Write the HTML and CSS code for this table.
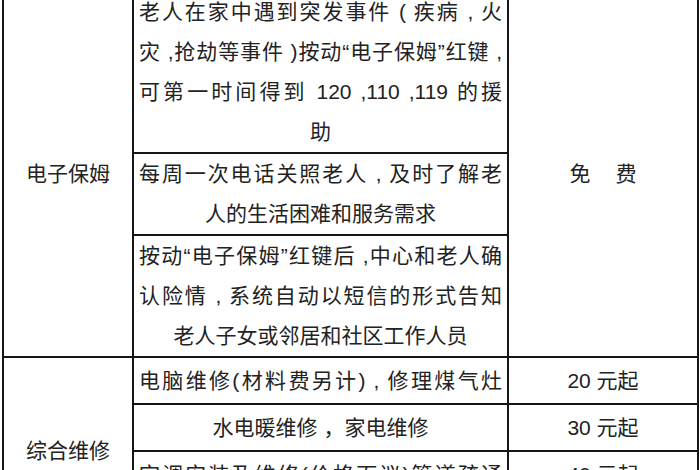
FILE: index.html
```html
<!DOCTYPE html>
<html lang="zh-CN">
<head>
<meta charset="utf-8">
<title>服务项目</title>
<link rel="stylesheet" href="styles.css">
</head>
<body>
<table class="svc">
  <colgroup>
    <col class="c1">
    <col class="c2">
    <col class="c3">
  </colgroup>
  <tbody>
    <tr>
      <td class="name" rowspan="3">电子保姆</td>
      <td class="desc">
        <span class="ln full">老人在家中遇到突发事件 ( 疾病 , 火</span>
        <span class="ln full">灾 ,抢劫等事件 )按动“电子保姆”红键 ,</span>
        <span class="ln full">可第一时间得到 120 ,110 ,119 的援</span>
        <span class="ln">助</span>
      </td>
      <td class="price" rowspan="3"><span class="free">免</span>费</td>
    </tr>
    <tr>
      <td class="desc">
        <span class="ln full">每周一次电话关照老人 , 及时了解老</span>
        <span class="ln">人的生活困难和服务需求</span>
      </td>
    </tr>
    <tr>
      <td class="desc">
        <span class="ln full">按动“电子保姆”红键后 ,中心和老人确</span>
        <span class="ln full">认险情 , 系统自动以短信的形式告知</span>
        <span class="ln">老人子女或邻居和社区工作人员</span>
      </td>
    </tr>
    <tr class="one">
      <td class="name" rowspan="4">综合维修</td>
      <td class="desc"><span class="ln full">电脑维修(材料费另计) , 修理煤气灶</span></td>
      <td class="price">20 元起</td>
    </tr>
    <tr class="one">
      <td class="desc">水电暖维修 ，家电维修</td>
      <td class="price">30 元起</td>
    </tr>
    <tr class="one">
      <td class="desc"><span class="ln full">空调安装及维修(价格面议)管道疏通</span></td>
      <td class="price">40 元起</td>
    </tr>
    <tr class="one">
      <td class="desc">家具维修 ，门窗维修</td>
      <td class="price">30 元起</td>
    </tr>
  </tbody>
</table>
</body>
</html>
```
FILE: styles.css
```css
html, body {
  margin: 0;
  padding: 0;
  overflow: hidden;
  background: #ffffff;
}

body {
  font-family: "Liberation Sans", "Noto Sans CJK SC", sans-serif;
  color: #222222;
  font-size: 21px;
}

.svc {
  border-collapse: collapse;
  table-layout: fixed;
  width: 695px;
  margin: -10px 0 0 2px;
}

.c1 { width: 130px; }
.c2 { width: 375px; }
.c3 { width: 190px; }

.svc td {
  border: 2px solid #161616;
  padding: 0 5px;
  line-height: 40px;
  text-align: center;
  vertical-align: middle;
}

.ln {
  display: block;
  text-align: center;
  white-space: nowrap;
}

.ln.full {
  text-align: justify;
  text-align-last: justify;
}

.one td {
  height: 45px;
}

.free {
  margin-right: 25px;
}
```
